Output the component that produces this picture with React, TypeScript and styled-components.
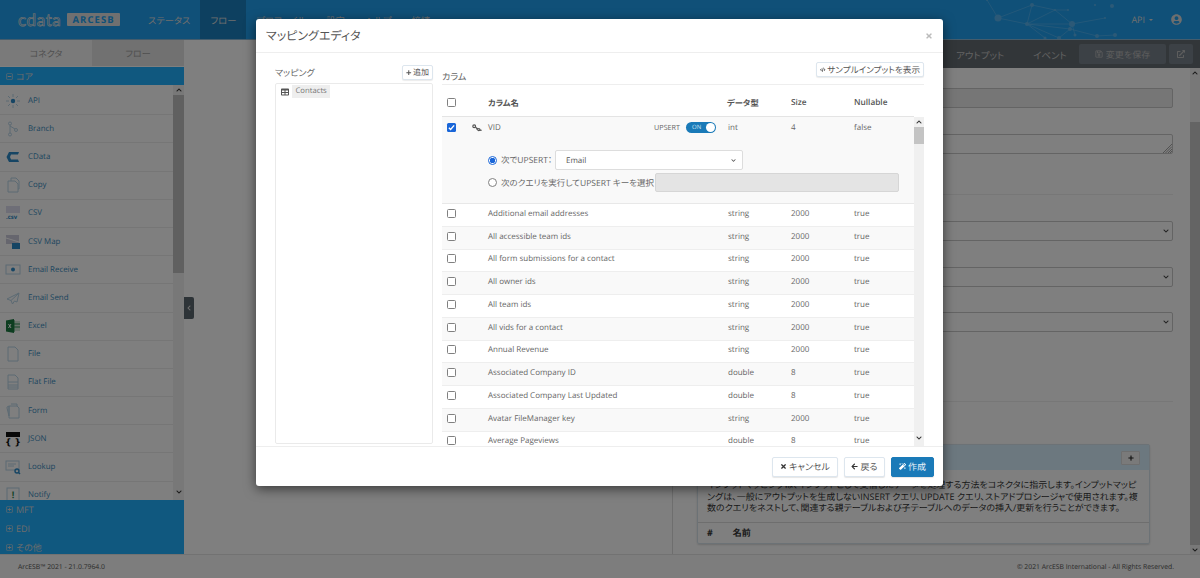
import React from "react";
import styled, { createGlobalStyle } from "styled-components";
import {
  FaTimes, FaArrowLeft, FaMagic, FaCode, FaPlus, FaTable, FaRegSave, FaExternalLinkAlt,
  FaChevronUp, FaChevronDown, FaChevronLeft, FaUserCircle, FaRegPlusSquare, FaRegMinusSquare,
} from "react-icons/fa";

const Global = createGlobalStyle`
  html, body { margin: 0; padding: 0; background: #fff; }
  * { box-sizing: border-box; }
  body {
    font-family: "Open Sans", "Noto Sans CJK JP", sans-serif;
    font-size: 8px;
    color: #555;
    overflow: hidden;
    text-rendering: geometricPrecision;
    font-feature-settings: "palt";
  }
`;

const Page = styled.div`
  position: relative;
  width: 1200px;
  height: 578px;
  display: flex;
  flex-direction: column;
  overflow: hidden;
  background: #fff;
`;
const Header = styled.header`
  position: relative;
  height: 40px;
  flex: none;
  display: flex;
  align-items: stretch;
  background: #20a0f0;
  border-bottom: 1px solid #88b8d8;
`;
const Logo = styled.div`
  display: flex;
  align-items: center;
  gap: 6px;
  width: 138px;
  padding-left: 18px;
`;
const LogoWord = styled.span`
  font: 400 17px/1 "Lato", sans-serif;
  letter-spacing: 0.6px;
  color: transparent;
  -webkit-text-stroke: 0.7px #e0e0e0;
`;
const LogoBadge = styled.span`
  background: #e0e0e0;
  color: #20a0f0;
  font: 700 9.5px/13px "Open Sans", sans-serif;
  letter-spacing: 1.1px;
  padding: 0 5px;
  border-radius: 1px;
`;
const Nav = styled.nav`
  display: flex;
  align-items: stretch;
`;
const NavItem = styled.a<{ $active?: boolean }>`
  display: flex;
  align-items: center;
  padding: 0 10px;
  font-size: 9.3px;
  color: #dcdcdc;
  background: ${(p) => (p.$active ? "#1a80c0" : "transparent")};
`;
const Net = styled.svg`
  position: absolute;
  left: 960px;
  top: 0;
  opacity: 0.7;
`;
const HeaderRight = styled.div`
  margin-left: auto;
  display: flex;
  align-items: center;
  gap: 4px;
  padding-right: 18px;
  color: #ddd;
  font-size: 9px;
  position: relative;
`;
const Caret = styled.i`
  width: 0;
  height: 0;
  border: 2.5px solid transparent;
  border-top-color: #ddd;
  border-bottom: 0;
  margin-right: 14px;
`;
const Content = styled.div`
  flex: 1;
  min-height: 0;
  display: flex;
  position: relative;
`;
const Sidebar = styled.aside`
  width: 184px;
  flex: none;
  display: flex;
  flex-direction: column;
  background: #fff;
`;
const SideTabs = styled.div`
  height: 27px;
  flex: none;
  display: flex;
  padding-bottom: 1px;
  background: #fff;
`;
const SideTab = styled.div<{ $on?: boolean }>`
  flex: 1;
  display: flex;
  align-items: center;
  justify-content: center;
  font-size: 9px;
  color: #a0a0a0;
  background: ${(p) => (p.$on ? "#f4f4f4" : "#e2e2e2")};
`;
const GroupBar = styled.div<{ $h?: number }>`
  height: ${(p) => p.$h ?? 18}px;
  flex: none;
  display: flex;
  align-items: center;
  gap: 3px;
  padding-left: 6px;
  background: #20b0ff;
  color: #d8d8d8;
  font-size: 9px;
  svg { font-size: 7px; }
`;
const SideBody = styled.div`
  flex: 1;
  min-height: 0;
  display: flex;
`;
const SideList = styled.div`
  flex: 1;
  min-width: 0;
  overflow: hidden;
  padding-top: 2px;
`;
const SideItem = styled.div`
  height: 28.2px;
  display: flex;
  align-items: center;
  gap: 7px;
  padding-left: 5px;
  border-bottom: 1px solid #ececec;
  color: #3a8cc0;
  font-size: 7.9px;
`;
const Track = styled.div<{ $w: number; $bg: string }>`
  width: ${(p) => p.$w}px;
  flex: none;
  display: flex;
  flex-direction: column;
  align-items: center;
  background: ${(p) => p.$bg};
  color: #333;
  svg { flex: none; font-size: 6px; margin: 2px 0; }
`;
const TrackGap = styled.div<{ $h: number }>`
  height: ${(p) => p.$h}px;
  flex: none;
`;
const Thumb = styled.div<{ $h: number; $c: string }>`
  width: 100%;
  height: ${(p) => p.$h}px;
  flex: none;
  background: ${(p) => p.$c};
`;
const TrackEnd = styled.div`
  margin-top: auto;
`;
const SideGroups = styled.div`
  height: 54px;
  flex: none;
  overflow: hidden;
  background: #20b0ff;
`;
const Main = styled.main`
  flex: 1;
  min-width: 0;
  display: flex;
  background: #fff;
  position: relative;
`;
const Handle = styled.div`
  position: absolute;
  left: 0;
  top: 257px;
  width: 10px;
  height: 22px;
  background: #5a666e;
  border-radius: 0 2px 2px 0;
  color: #ddd;
  display: flex;
  align-items: center;
  justify-content: center;
  svg { font-size: 6px; }
`;
const Canvas = styled.div`
  width: 488px;
  flex: none;
`;
const Pane = styled.section`
  flex: 1;
  min-width: 0;
  display: flex;
  flex-direction: column;
  border-left: 1px solid #ddd;
`;
const PaneTabs = styled.div`
  height: 28px;
  flex: none;
  display: flex;
  align-items: center;
  background: #646c72;
  color: #c4c4c4;
  font-size: 9.5px;
`;
const PaneTab = styled.span<{ $w: number }>`
  width: ${(p) => p.$w}px;
  flex: none;
  padding-top: 2px;
`;
const SaveBtn = styled.div`
  width: 87px;
  height: 20px;
  margin-left: auto;
  display: flex;
  align-items: center;
  justify-content: center;
  gap: 3px;
  background: #78828c;
  border-radius: 2px;
  color: #bbb;
  font-size: 9px;
  svg { font-size: 8px; }
`;
const OpenBtn = styled.div`
  width: 24px;
  height: 20px;
  margin: 0 7px 0 3px;
  display: flex;
  align-items: center;
  justify-content: center;
  background: #78828c;
  border-radius: 2px;
  color: #bbb;
  svg { font-size: 8px; }
`;
const PaneBody = styled.div`
  flex: 1;
  min-height: 0;
  display: flex;
`;
const Form = styled.div`
  flex: 1;
  min-width: 0;
  padding: 20px 17px 0 24px;
  display: flex;
  flex-direction: column;
  overflow: hidden;
`;
const Field = styled.div<{ $mt: number; $bg?: string }>`
  height: 20px;
  flex: none;
  margin-top: ${(p) => p.$mt}px;
  display: flex;
  align-items: center;
  justify-content: flex-end;
  padding-right: 3px;
  border: 1px solid #c8c8c8;
  border-radius: 2px;
  background: ${(p) => p.$bg ?? "#fff"};
  color: #444;
  svg { font-size: 6px; }
`;
const AreaField = styled(Field)`
  align-items: flex-end;
  padding-right: 0;
  svg { font-size: 9px; }
`;
const Rule = styled.hr<{ $mt: number }>`
  flex: none;
  width: 100%;
  margin: ${(p) => p.$mt}px 0 0;
  border: 0;
  border-top: 1px solid #eee;
`;
const InfoPanel = styled.div`
  width: 453px;
  height: 100px;
  flex: none;
  margin-top: 42px;
  border: 1px solid #d8e4ec;
  border-radius: 2px;
  box-shadow: 0 1px 2px rgba(0, 0, 0, 0.15);
`;
const InfoHead = styled.div`
  height: 25px;
  display: flex;
  align-items: center;
  justify-content: flex-end;
  padding-right: 9px;
  background: #d8f0ff;
`;
const PlusBtn = styled.div`
  width: 19px;
  height: 14px;
  display: flex;
  align-items: center;
  justify-content: center;
  background: #f4f4f4;
  border: 1px solid #ddd;
  border-radius: 1px;
  color: #222;
  svg { font-size: 6px; }
`;
const InfoText = styled.p`
  margin: 0;
  height: 53px;
  padding: 9px 9px 0;
  font-size: 9px;
  line-height: 11.6px;
  color: #333;
  overflow: hidden;
  border-bottom: 1px solid #ddd;
  word-break: break-all;
`;
const InfoCols = styled.div`
  display: flex;
  align-items: center;
  height: 21px;
  padding: 0 0 3px 9px;
  font-size: 9px;
  font-weight: 700;
  color: #333;
  gap: 20px;
`;
const Footer = styled.footer`
  height: 24px;
  flex: none;
  display: flex;
  align-items: center;
  justify-content: space-between;
  padding: 0 26px 0 18px;
  border-top: 1px solid #e4e4e4;
  background: #fafafa;
  color: #555;
  font-size: 6.8px;
`;
const Overlay = styled.div`
  position: absolute;
  inset: 0;
  background: rgba(0, 0, 0, 0.5);
`;
const Modal = styled.div`
  position: absolute;
  left: 256px;
  top: 19px;
  width: 687px;
  height: 467px;
  display: flex;
  flex-direction: column;
  background: #fff;
  border-radius: 3px;
  box-shadow: 0 3px 12px rgba(0, 0, 0, 0.55);
  overflow: hidden;
`;
const ModalHead = styled.div`
  height: 34px;
  flex: none;
  display: flex;
  align-items: center;
  justify-content: space-between;
  padding: 0 10px;
  border-bottom: 1px solid #eee;
  font-size: 12px;
  color: #555;
  svg { font-size: 8px; color: #bbb; }
`;
const ModalBody = styled.div`
  flex: 1;
  min-height: 0;
  display: flex;
  gap: 9px;
  padding: 0 19px;
`;
const LeftCol = styled.div`
  width: 158px;
  flex: none;
  display: flex;
  flex-direction: column;
  padding: 12px 0 2px;
`;
const ColHead = styled.div`
  height: 18px;
  flex: none;
  display: flex;
  align-items: flex-start;
  justify-content: space-between;
  font-size: 9px;
  color: #666;
`;
const ColTitle = styled.span`
  padding-top: 1px;
`;
const SmallBtn = styled.div<{ $size: number }>`
  height: 15px;
  display: flex;
  align-items: center;
  gap: 1.5px;
  padding: 0 3px;
  border: 1px solid #dde6ee;
  border-radius: 2px;
  background: #fff;
  color: #555;
  font-size: ${(p) => p.$size}px;
  box-shadow: 0 1px 1px rgba(0, 0, 0, 0.08);
  svg { font-size: 5.5px; }
`;
const TreeBox = styled.div`
  flex: 1;
  border: 1px solid #eaeaea;
  border-radius: 2px;
  padding: 1px 5px;
  display: flex;
  align-items: flex-start;
  gap: 3px;
  color: #777;
  svg { font-size: 8px; margin-top: 3px; color: #555; }
`;
const TreeLabel = styled.span`
  background: #eee;
  padding: 0 3.5px;
  height: 13px;
  line-height: 13px;
  font-size: 7.7px;
`;
const RightCol = styled.div`
  flex: 1;
  min-width: 0;
  display: flex;
  flex-direction: column;
  padding-top: 9px;
`;
const RightHead = styled.div`
  height: 23px;
  flex: none;
  display: flex;
  justify-content: space-between;
  border-bottom: 1px solid #eee;
  font-size: 9px;
  color: #666;
`;
const RightTitle = styled.span`
  padding-top: 8px;
`;
const TableHead = styled.div`
  height: 32px;
  flex: none;
  display: grid;
  grid-template-columns: 46px 239px 64px 63px 1fr;
  align-items: center;
  width: 472px;
  border-bottom: 1px solid #e4e4e4;
  font-size: 8.3px;
  font-weight: 600;
  color: #555;
  padding-top: 4px;
`;
const TableWrap = styled.div`
  flex: 1;
  min-height: 0;
  display: flex;
`;
const Rows = styled.div`
  flex: 1;
  min-width: 0;
  overflow: hidden;
`;
const Row = styled.div<{ $alt?: boolean }>`
  height: 22.75px;
  display: grid;
  grid-template-columns: 46px 240px 63px 63px 1fr;
  align-items: center;
  border-bottom: 1px solid #eee;
  background: ${(p) => (p.$alt ? "#f9f9f9" : "#fff")};
  color: #666;
  font-size: 8px;
  padding-bottom: 3px;
`;
const VidRow = styled.div`
  height: 87px;
  background: #f9f9f9;
  border-bottom: 1px solid #e8e8e8;
  color: #666;
  font-size: 8px;
`;
const VidMain = styled.div`
  height: 21px;
  display: grid;
  grid-template-columns: 46px 240px 63px 63px 1fr;
  align-items: center;
`;
const CheckCell = styled.div`
  display: flex;
  align-items: center;
  padding-left: 5px;
  gap: 16px;
`;
const Box = styled.span<{ $on?: boolean }>`
  width: 9px;
  height: 9px;
  flex: none;
  display: inline-flex;
  align-items: center;
  justify-content: center;
  border-radius: 1.5px;
  border: ${(p) => (p.$on ? "none" : "1px solid #808080")};
  background: ${(p) => (p.$on ? "#1a66d8" : "#fff")};
`;
const NameCell = styled.div`
  display: flex;
  align-items: center;
  padding-right: 12px;
`;
const UpsertLabel = styled.span`
  margin-left: auto;
  margin-right: 6px;
  font-size: 7.2px;
`;
const Toggle = styled.span`
  position: relative;
  width: 30px;
  height: 11px;
  border-radius: 6px;
  background: #1a7ab8;
  color: #cfe4f2;
  font-size: 6px;
  line-height: 11px;
  padding-left: 6px;
`;
const Knob = styled.i`
  position: absolute;
  right: 1px;
  top: 1px;
  width: 9px;
  height: 9px;
  border-radius: 50%;
  background: #fff;
`;
const Options = styled.div`
  margin-top: 12px;
  padding-left: 46px;
  display: flex;
  flex-direction: column;
  gap: 3px;
`;
const OptLine = styled.div<{ $h: number }>`
  height: ${(p) => p.$h}px;
  display: flex;
  align-items: center;
`;
const OptText = styled.span<{ $w: number }>`
  width: ${(p) => p.$w}px;
  flex: none;
  white-space: nowrap;
  font-size: 8.5px;
`;
const Radio = styled.span<{ $on?: boolean }>`
  width: 9px;
  height: 9px;
  flex: none;
  margin-right: 4px;
  border-radius: 50%;
  border: 1px solid ${(p) => (p.$on ? "#1a66d8" : "#808080")};
  background: ${(p) => (p.$on ? "radial-gradient(circle, #1a66d8 0 2.6px, #fff 3px)" : "#fff")};
`;
const SelectBox = styled.div`
  width: 188px;
  height: 20px;
  display: flex;
  align-items: center;
  justify-content: space-between;
  padding: 0 6px 0 10px;
  background: #fff;
  border: 1px solid #ddd;
  border-radius: 2px;
  color: #555;
  svg { font-size: 5px; }
`;
const Disabled = styled.div`
  width: 244px;
  height: 19px;
  background: #e4e4e4;
  border: 1px solid #d6d6d6;
  border-radius: 2px;
`;
const ModalFoot = styled.div`
  height: 40px;
  flex: none;
  display: flex;
  align-items: center;
  justify-content: flex-end;
  gap: 6px;
  padding-right: 9px;
  border-top: 1px solid #eee;
`;
const FootBtn = styled.div<{ $primary?: boolean; $w: number }>`
  width: ${(p) => p.$w}px;
  height: 20px;
  display: flex;
  align-items: center;
  justify-content: center;
  gap: 2px;
  border-radius: 2px;
  font-size: 9px;
  border: 1px solid ${(p) => (p.$primary ? "#1a7ab8" : "#dde6ee")};
  background: ${(p) => (p.$primary ? "#1a7ab8" : "#fff")};
  color: ${(p) => (p.$primary ? "#e8f2f8" : "#555")};
  box-shadow: 0 1px 1px rgba(0, 0, 0, 0.1);
  svg { font-size: 7px; color: ${(p) => (p.$primary ? "#fff" : "#333")}; }
`;

const I = ({ children }: { children: React.ReactNode }) => (
  <svg width="16" height="16" viewBox="0 0 16 16" fill="none" stroke="#b8d4e6" strokeWidth="1" style={{ flex: "none" }}>
    {children}
  </svg>
);
const icons: Record<string, React.ReactNode> = {
  API: (
    <I>
      <circle cx="8" cy="8" r="2.2" fill="#2c8ac8" stroke="none" />
      <path d="M8 1v3M8 12v3M1 8h3M12 8h3M3 3l2 2M11 11l2 2M13 3l-2 2M5 11l-2 2" />
    </I>
  ),
  Branch: (
    <I>
      <circle cx="5" cy="2.5" r="1.5" />
      <circle cx="5" cy="13.5" r="1.5" />
      <circle cx="11" cy="9" r="1.5" />
      <path d="M5 4v8M5 5l5 3" />
    </I>
  ),
  CData: (
    <I>
      <path d="M14 3H4L1.5 8 4 13h10l-1-2.5H6L5 8l1-2.5h7z" fill="#2c8ac8" stroke="none" />
    </I>
  ),
  Copy: (
    <I>
      <path d="M3 4h7l3 3v8H3z" />
      <path d="M6 4V1h5l3 3v8h-1" />
    </I>
  ),
  CSV: (
    <I>
      <rect x="1" y="1" width="14" height="7" fill="#dde" stroke="none" />
      <text x="1" y="14" fontSize="6" fontWeight="700" fill="#2c8ac8" stroke="none" fontFamily="Open Sans">.csv</text>
    </I>
  ),
  "CSV Map": (
    <I>
      <rect x="1" y="1" width="13" height="9" fill="#ccd" stroke="none" />
      <path d="M1 4l13 4" stroke="#fff" />
      <rect x="7" y="9" width="8" height="6" fill="#2c8ac8" stroke="none" />
    </I>
  ),
  "Email Receive": (
    <I>
      <rect x="1" y="3" width="14" height="9" />
      <circle cx="8" cy="7.5" r="2" fill="#2c8ac8" stroke="none" />
    </I>
  ),
  "Email Send": (
    <I>
      <path d="M14 3L2 9l4 1.5 1.5 3.5 2-3 2.5 1zM6 10.5L14 3" />
    </I>
  ),
  Excel: (
    <I>
      <rect x="7" y="3" width="8" height="10" fill="#cfe5d4" stroke="none" />
      <path d="M9 14V2M7 6h8M7 9h8" stroke="#2a8a50" />
      <path d="M1 2.5L9 1v14l-8-1.5z" fill="#1a7a40" stroke="none" />
      <path d="M3.5 6l2.5 4M6 6l-2.5 4" stroke="#fff" />
    </I>
  ),
  File: (
    <I>
      <path d="M3 1h7l3 3v11H3z" />
    </I>
  ),
  "Flat File": (
    <I>
      <path d="M3 1h7l3 3v11H3zM3 8h10M3 11h10M3 13h10" />
    </I>
  ),
  Form: (
    <I>
      <path d="M4 3h8l2 2v10H4zM2 4l2-1v10L2 5zM6 1h6v2" />
    </I>
  ),
  JSON: (
    <I>
      <rect x="1" y="1" width="14" height="5" fill="#111" stroke="none" />
      <text x="8" y="14" textAnchor="middle" fontSize="9" fontWeight="700" fill="#111" stroke="none" fontFamily="DejaVu Sans">{"{ }"}</text>
    </I>
  ),
  Lookup: (
    <I>
      <rect x="1" y="2" width="13" height="9" />
      <path d="M3 5h8M3 7h6" />
      <circle cx="12" cy="12" r="2" stroke="#2c8ac8" strokeWidth="1.4" />
      <path d="M13.5 13.5l1.5 1.5" stroke="#2c8ac8" strokeWidth="1.4" />
    </I>
  ),
  Notify: (
    <I>
      <rect x="2" y="1" width="12" height="13" />
      <text x="8" y="11" textAnchor="middle" fontSize="9" fontWeight="700" fill="#2a8a50" stroke="none" fontFamily="Open Sans">!</text>
    </I>
  ),
};
const items = Object.keys(icons);

const data: [string, string, string][] = [
  ["Additional email addresses", "string", "2000"],
  ["All accessible team ids", "string", "2000"],
  ["All form submissions for a contact", "string", "2000"],
  ["All owner ids", "string", "2000"],
  ["All team ids", "string", "2000"],
  ["All vids for a contact", "string", "2000"],
  ["Annual Revenue", "string", "2000"],
  ["Associated Company ID", "double", "8"],
  ["Associated Company Last Updated", "double", "8"],
  ["Avatar FileManager key", "string", "2000"],
  ["Average Pageviews", "double", "8"],
];

const Check = () => (
  <svg width="7" height="7" viewBox="0 0 8 8" fill="none" stroke="#fff" strokeWidth="1.6">
    <path d="M1 4.2l2 2L7 1.6" />
  </svg>
);
const Keys = () => (
  <svg width="10" height="8" viewBox="0 0 10 8" fill="none" stroke="#555" strokeWidth="1.2">
    <circle cx="2.2" cy="2.2" r="1.4" />
    <path d="M3.4 3.2L6 5M5 4.4L4.4 5.4" />
    <circle cx="6.8" cy="5.6" r="1.1" />
    <path d="M7.6 6.2L9.6 6.4" />
  </svg>
);
const Grip = () => (
  <svg width="9" height="9" viewBox="0 0 9 9" stroke="#666" strokeWidth="0.6">
    <path d="M9 0L0 9M9 2.5L2.5 9M9 5L5 9M9 7L7 9" />
  </svg>
);
const Network = () => {
  const pts: [number, number, number][] = [
    [38, 18, 3.5], [72, 5, 2], [67, 24, 2], [95, 10, 1], [108, 10, 1], [112, 24, 3], [110, 29, 2],
    [99, 38, 2], [85, 38, 1.5], [137, 36, 2], [152, 6, 2], [145, 18, 1], [135, 5, 1], [115, 35, 1.5], [27, 0, 1], [155, 35, 2],
  ];
  const lines = [[0, 1], [0, 2], [1, 2], [1, 3], [2, 3], [2, 5], [2, 6], [2, 7], [2, 8], [3, 5], [5, 11], [6, 7], [6, 9], [0, 14], [4, 3], [9, 15], [5, 13]];
  return (
    <Net width="200" height="39" viewBox="0 0 200 39">
      {lines.map(([a, b], i) => (
        <line key={i} x1={pts[a][0]} y1={pts[a][1]} x2={pts[b][0]} y2={pts[b][1]} stroke="#7cc8f8" strokeWidth="0.6" />
      ))}
      {pts.map(([x, y, r], i) => (
        <circle key={i} cx={x} cy={y} r={r} fill="#70bcee" />
      ))}
    </Net>
  );
};

export default function App() {
  return (
    <Page>
      <Global />
      <Header>
        <Logo>
          <LogoWord>cdata</LogoWord>
          <LogoBadge>ARCESB</LogoBadge>
        </Logo>
        <Nav>
          <NavItem>ステータス</NavItem>
          <NavItem $active>フロー</NavItem>
          <NavItem>プロファイル</NavItem>
          <NavItem>設定</NavItem>
          <NavItem>ヘルプ</NavItem>
          <NavItem>接続</NavItem>
        </Nav>
        <Network />
        <HeaderRight>
          API <Caret />
          <FaUserCircle size={11} />
        </HeaderRight>
      </Header>
      <Content>
        <Sidebar>
          <SideTabs>
            <SideTab $on>コネクタ</SideTab>
            <SideTab>フロー</SideTab>
          </SideTabs>
          <GroupBar>
            <FaRegMinusSquare /> コア
          </GroupBar>
          <SideBody>
            <SideList>
              {items.map((n) => (
                <SideItem key={n}>
                  {icons[n]}
                  {n}
                </SideItem>
              ))}
            </SideList>
            <Track $w={11} $bg="#f0f0f0">
              <FaChevronUp />
              <Thumb $h={178} $c="#c0c0c0" />
              <TrackEnd>
                <FaChevronDown />
              </TrackEnd>
            </Track>
          </SideBody>
          <SideGroups>
            <GroupBar $h={19}><FaRegPlusSquare /> MFT</GroupBar>
            <GroupBar $h={19}><FaRegPlusSquare /> EDI</GroupBar>
            <GroupBar $h={19}><FaRegPlusSquare /> その他</GroupBar>
          </SideGroups>
        </Sidebar>
        <Main>
          <Handle><FaChevronLeft /></Handle>
          <Canvas />
          <Pane>
            <PaneTabs>
              <PaneTab $w={283} />
              <PaneTab $w={77}>アウトプット</PaneTab>
              <PaneTab $w={40}>イベント</PaneTab>
              <SaveBtn><FaRegSave /> 変更を保存</SaveBtn>
              <OpenBtn><FaExternalLinkAlt /></OpenBtn>
            </PaneTabs>
            <PaneBody>
              <Form>
                <Field $mt={0} $bg="#ececec" />
                <AreaField $mt={26}><Grip /></AreaField>
                <Rule $mt={40} />
                <Field $mt={26}><FaChevronDown /></Field>
                <Field $mt={26}><FaChevronDown /></Field>
                <Field $mt={25}><FaChevronDown /></Field>
                <Rule $mt={69} />
                <InfoPanel>
                  <InfoHead>
                    <PlusBtn><FaPlus /></PlusBtn>
                  </InfoHead>
                  <InfoText>
                    インプットマッピングは、インプットとして受信したデータを処理する方法をコネクタに指示します。インプットマッピングは、一般にアウトプットを生成しないINSERT クエリ、UPDATE クエリ、ストアドプロシージャで使用されます。複数のクエリをネストして、関連する親テーブルおよび子テーブルへのデータの挿入/更新を行うことができます。
                  </InfoText>
                  <InfoCols>
                    <span>#</span>
                    <span>名前</span>
                  </InfoCols>
                </InfoPanel>
              </Form>
              <Track $w={10} $bg="#f0f0f0">
                <FaChevronUp />
                <TrackGap $h={44} />
                <Thumb $h={423} $c="#c8c8c8" />
                <TrackEnd>
                  <FaChevronDown />
                </TrackEnd>
              </Track>
            </PaneBody>
          </Pane>
        </Main>
      </Content>
      <Footer>
        <span>ArcESB™ 2021 - 21.0.7964.0</span>
        <span>© 2021 ArcESB International - All Rights Reserved.</span>
      </Footer>
      <Overlay />
      <Modal>
        <ModalHead>
          マッピングエディタ
          <FaTimes />
        </ModalHead>
        <ModalBody>
          <LeftCol>
            <ColHead>
              <ColTitle>マッピング</ColTitle>
              <SmallBtn $size={8}><FaPlus /> 追加</SmallBtn>
            </ColHead>
            <TreeBox>
              <FaTable />
              <TreeLabel>Contacts</TreeLabel>
            </TreeBox>
          </LeftCol>
          <RightCol>
            <RightHead>
              <RightTitle>カラム</RightTitle>
              <SmallBtn $size={8.6}><FaCode /> サンプルインプットを表示</SmallBtn>
            </RightHead>
            <TableHead>
              <CheckCell><Box /></CheckCell>
              <span>カラム名</span>
              <span>データ型</span>
              <span>Size</span>
              <span>Nullable</span>
            </TableHead>
            <TableWrap>
              <Rows>
                <VidRow>
                  <VidMain>
                    <CheckCell><Box $on><Check /></Box><Keys /></CheckCell>
                    <NameCell>
                      VID
                      <UpsertLabel>UPSERT</UpsertLabel>
                      <Toggle>ON<Knob /></Toggle>
                    </NameCell>
                    <span>int</span>
                    <span>4</span>
                    <span>false</span>
                  </VidMain>
                  <Options>
                    <OptLine $h={20}>
                      <Radio $on />
                      <OptText $w={54}>次でUPSERT：</OptText>
                      <SelectBox>Email <FaChevronDown /></SelectBox>
                    </OptLine>
                    <OptLine $h={19}>
                      <Radio />
                      <OptText $w={154}>次のクエリを実行してUPSERT キーを選択</OptText>
                      <Disabled />
                    </OptLine>
                  </Options>
                </VidRow>
                {data.map(([n, t, s], i) => (
                  <Row key={n} $alt={i % 2 === 1}>
                    <CheckCell><Box /></CheckCell>
                    <span>{n}</span>
                    <span>{t}</span>
                    <span>{s}</span>
                    <span>true</span>
                  </Row>
                ))}
              </Rows>
              <Track $w={10} $bg="#f0f0f0">
                <FaChevronUp />
                <Thumb $h={17} $c="#c4c4c4" />
                <TrackEnd>
                  <FaChevronDown />
                </TrackEnd>
              </Track>
            </TableWrap>
          </RightCol>
        </ModalBody>
        <ModalFoot>
          <FootBtn $w={66}><FaTimes /> キャンセル</FootBtn>
          <FootBtn $w={41}><FaArrowLeft /> 戻る</FootBtn>
          <FootBtn $w={43} $primary><FaMagic /> 作成</FootBtn>
        </ModalFoot>
      </Modal>
    </Page>
  );
}
